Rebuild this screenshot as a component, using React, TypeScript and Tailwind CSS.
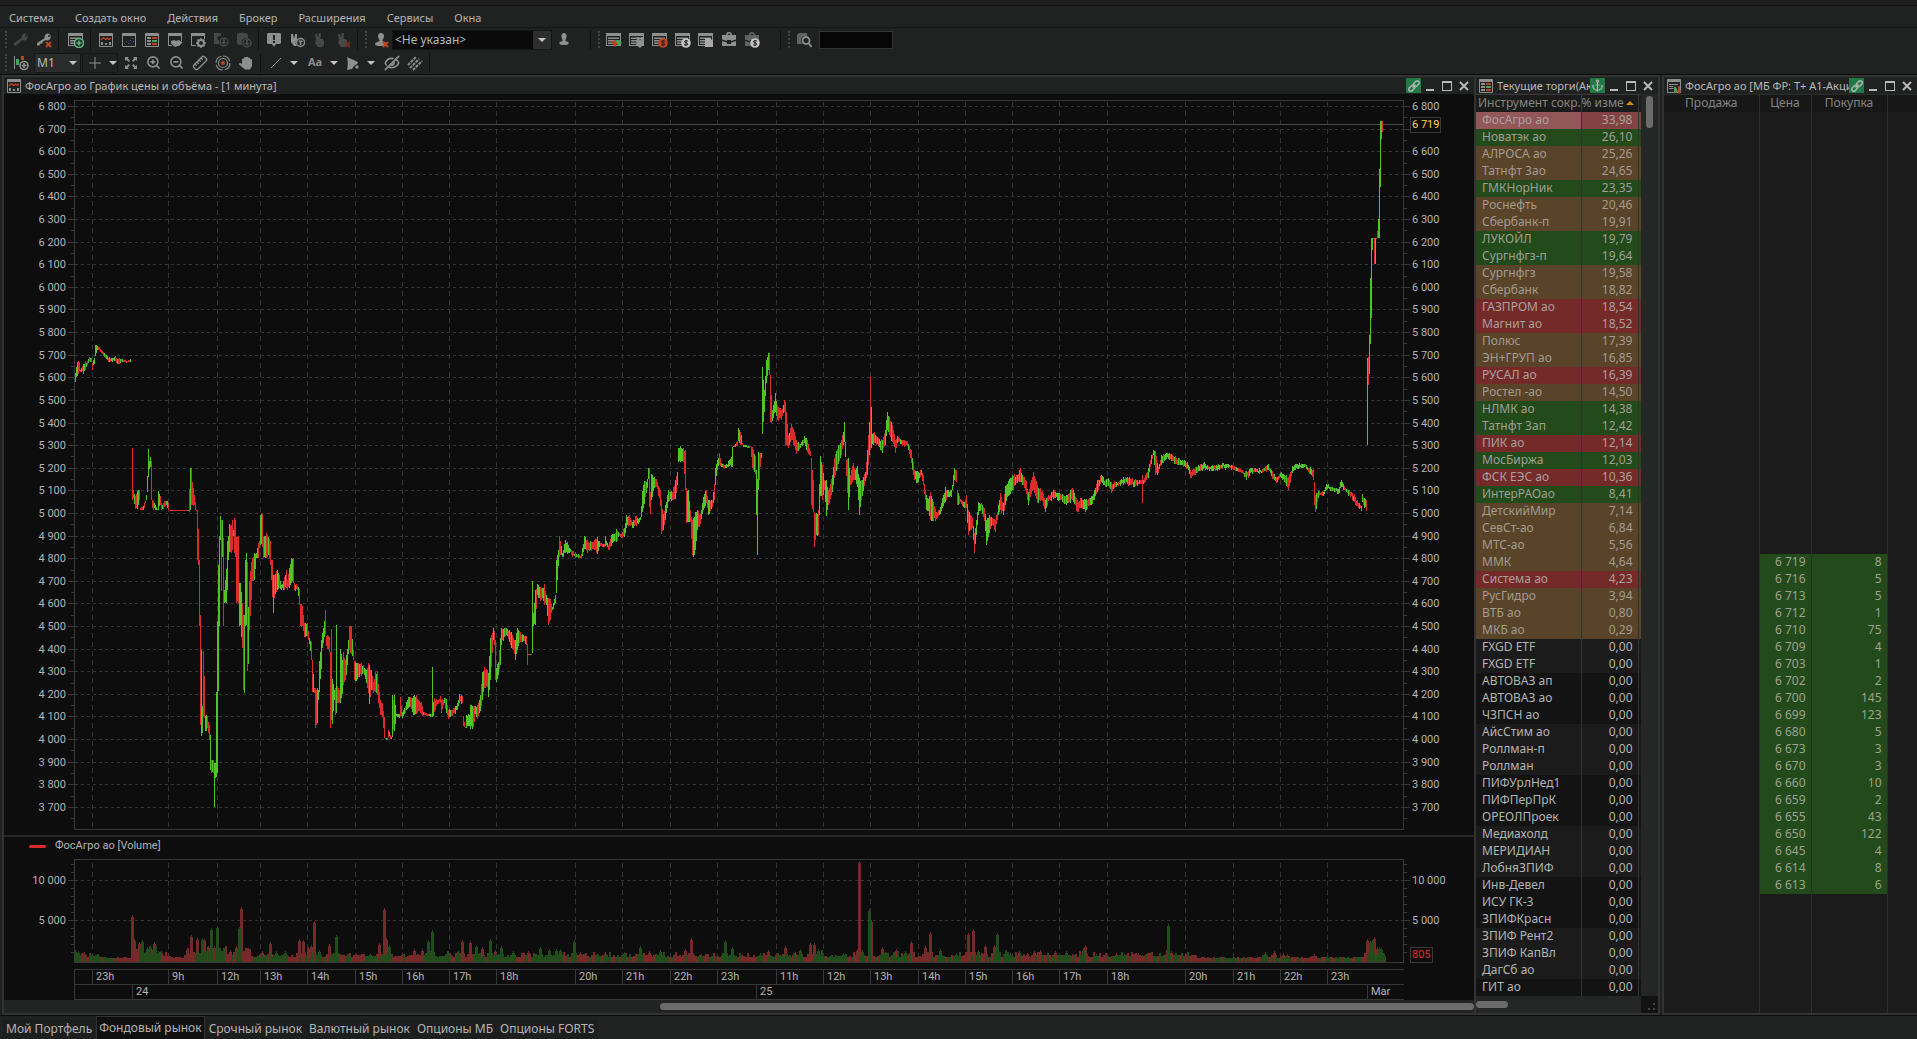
import type { ReactNode } from "react";
import { Anchor, EyeOff, Link, Ruler, ZoomIn, ZoomOut } from "lucide-react";

const MENU = ["Система", "Создать окно", "Действия", "Брокер", "Расширения", "Сервисы", "Окна"];

const TABS = ["Мой Портфель", "Фондовый рынок", "Срочный рынок", "Валютный рынок", "Опционы МБ", "Опционы FORTS"];

// name, change, row colour: s - selected, g - green, b - brown, r - red
const QUOTES: [string, string, string?][] = [
  ["ФосАгро ао", "33,98", "s"],
  ["Новатэк ао", "26,10", "g"],
  ["АЛРОСА ао", "25,26", "b"],
  ["Татнфт 3ао", "24,65", "b"],
  ["ГМКНорНик", "23,35", "g"],
  ["Роснефть", "20,46", "b"],
  ["Сбербанк-п", "19,91", "b"],
  ["ЛУКОЙЛ", "19,79", "g"],
  ["Сургнфгз-п", "19,64", "g"],
  ["Сургнфгз", "19,58", "b"],
  ["Сбербанк", "18,82", "b"],
  ["ГАЗПРОМ ао", "18,54", "r"],
  ["Магнит ао", "18,52", "r"],
  ["Полюс", "17,39", "b"],
  ["ЭН+ГРУП ао", "16,85", "b"],
  ["РУСАЛ ао", "16,39", "r"],
  ["Ростел -ао", "14,50", "b"],
  ["НЛМК ао", "14,38", "g"],
  ["Татнфт 3ап", "12,42", "g"],
  ["ПИК ао", "12,14", "r"],
  ["МосБиржа", "12,03", "g"],
  ["ФСК ЕЭС ао", "10,36", "r"],
  ["ИнтерРАОао", "8,41", "g"],
  ["ДетскийМир", "7,14", "b"],
  ["СевСт-ао", "6,84", "b"],
  ["МТС-ао", "5,56", "b"],
  ["ММК", "4,64", "b"],
  ["Система ао", "4,23", "r"],
  ["РусГидро", "3,94", "b"],
  ["ВТБ ао", "0,80", "b"],
  ["МКБ ао", "0,29", "b"],
  ["FXGD ETF", "0,00"],
  ["FXGD ETF", "0,00"],
  ["АВТОВАЗ ап", "0,00"],
  ["АВТОВАЗ ао", "0,00"],
  ["ЧЗПСН ао", "0,00"],
  ["АйсСтим ао", "0,00"],
  ["Роллман-п", "0,00"],
  ["Роллман", "0,00"],
  ["ПИФУрлНед1", "0,00"],
  ["ПИФПерПрК", "0,00"],
  ["ОРЕОЛПроек", "0,00"],
  ["Медиахолд", "0,00"],
  ["МЕРИДИАН", "0,00"],
  ["ЛобняЗПИФ", "0,00"],
  ["Инв-Девел", "0,00"],
  ["ИСУ ГК-3", "0,00"],
  ["ЗПИФКрасн", "0,00"],
  ["ЗПИФ Рент2", "0,00"],
  ["ЗПИФ КапВл", "0,00"],
  ["ДагСб ао", "0,00"],
  ["ГИТ ао", "0,00"],
];

const BIDS: [string, number][] = [
  ["6 719", 8], ["6 716", 5], ["6 713", 5], ["6 712", 1], ["6 710", 75],
  ["6 709", 4], ["6 703", 1], ["6 702", 2], ["6 700", 145], ["6 699", 123],
  ["6 680", 5], ["6 673", 3], ["6 670", 3], ["6 660", 10], ["6 659", 2],
  ["6 655", 43], ["6 650", 122], ["6 645", 4], ["6 614", 8], ["6 613", 6],
];

const HOURS: [number, string][] = [
  [92, "23h"], [168, "9h"], [217, "12h"], [260, "13h"], [307, "14h"], [355, "15h"], [402, "16h"],
  [449, "17h"], [496, "18h"], [575, "20h"], [622, "21h"], [670, "22h"], [717, "23h"], [776, "11h"],
  [823, "12h"], [870, "13h"], [918, "14h"], [965, "15h"], [1012, "16h"], [1059, "17h"], [1107, "18h"],
  [1185, "20h"], [1233, "21h"], [1280, "22h"], [1327, "23h"],
];

const DAYS: [number, string][] = [[132, "24"], [756, "25"], [1367, "Mar"]];

const X0 = 75;
const X1 = 1404;
const Y0 = 100;
const Y1 = 830;

// Outline of the price series: x, high, low, direction (g up, r down, m both)
const SERIES = `
75 373 382 g,76 367 377 g,77 362 376 g,79 362 371 r,80 370 372 r,82 366 371 m,83 364 374 m,85 361 370 r,87 361 365 m,89 357 361 r,91 358 362 r,92 363 370 r,93 360 365 g,94 358 364 g,95 345 356 g,97 346 350 m,99 347 350 r,101 350 353 r,104 353 357 g,107 356 360 m,109 357 362 g,112 358 362 m,115 356 361 m,118 359 364 m,121 359 362 m,124 360 362 m,127 361 362 r,130 359 362 g
132 448 500 r,133 490 498 r,135 496 509 r,137 491 509 g,139 490 500 r,140 508 510 r,143 506 510 g,146 495 500 g,147 476 492 g,148 449 477 g,149 461 469 g,150 457 467 g,151 461 500 r,152 500 508 r,155 505 510 m,157 509 510 r,158 491 510 g,160 496 505 r,161 503 510 r,165 501 506 m,168 503 510 r,169 510 511 r,188 510 511 g,190 468 510 g,191 468 505 r,192 482 505 r,194 495 505 r,195 502 510 r,196 510 511 r,197 510 560 r,198 529 565 r,199 560 626 r,200 615 725 r,201 650 736 g,202 706 733 g,203 651 716 r,204 676 718 r,205 716 731 g,207 716 728 r,209 725 740 r,210 735 770 g,211 760 773 r,213 760 773 r,214 763 807 g,215 763 778 g,217 621 773 g,218 565 691 g,219 536 626 g,220 516 540 g,221 520 591 r,222 520 557 g,223 538 626 r,224 590 603 g,226 569 603 g,227 541 590 g,228 536 560 g,229 524 552 m,231 525 553 r,232 520 550 r,233 530 536 g,234 518 553 r,235 520 557 r,236 537 603 r,238 536 603 r,239 583 626 g,240 583 625 g,242 603 648 r,243 615 690 r,244 615 693 g,245 560 626 g,246 553 625 m,247 562 671 r,248 607 664 g,249 581 630 r,251 562 600 r,252 558 581 r,254 553 580 g,256 553 558 g,258 543 558 r,259 541 548 r,260 515 545 g,262 514 547 r,263 537 558 r,265 536 558 g,266 533 558 m,268 537 555 g,270 541 565 r,271 560 580 r,272 560 597 r,273 575 613 g,274 575 598 r,277 570 590 g,279 575 588 m,281 585 590 g,284 577 590 r,286 570 588 r,287 580 590 m,289 568 588 g,291 558 583 g,293 558 583 r,294 583 590 m,297 586 590 r,299 589 605 r,300 604 626 r,302 606 626 r,304 623 637 r,305 623 637 g,307 623 636 r,309 638 644 g,311 642 660 r,312 660 692 r,314 688 693 m,315 688 728 r,317 688 723 g,318 690 700 g,319 661 692 g,321 640 669 g,322 633 648 g,324 621 637 g,325 610 634 r,326 636 646 r,328 636 649 m,329 637 652 r,330 652 728 r,331 629 720 r,332 679 724 g,334 690 700 g,335 688 715 r,336 625 713 g,337 686 703 r,339 690 702 r,340 649 703 g,342 660 694 g,343 652 685 r,345 660 680 r,346 655 675 g,348 640 654 g,349 626 650 r,351 626 654 r,353 650 660 r,354 661 680 m,356 663 681 g,358 663 677 r,363 665 673 r,366 670 683 g,368 663 693 r,369 665 704 g,371 670 690 g,373 682 693 r,375 672 692 r,377 671 695 r,378 684 703 r,380 700 715 r,382 703 717 r,384 717 738 r,385 738 739 r,387 738 740 r,388 730 738 r,391 737 739 g,392 695 737 g,393 700 729 r,394 695 731 g,396 714 716 g,399 714 718 g,400 697 716 r,402 712 718 g,405 706 713 m,408 697 708 g,410 697 707 r,413 696 715 g,416 695 714 r,418 700 711 r,421 702 714 r,423 712 715 g,428 714 716 r,431 714 717 r,432 667 717 g,433 702 716 g,434 698 712 r,437 700 704 m,440 696 703 r,441 700 713 r,444 698 703 g,446 699 713 m,448 710 719 r,452 710 716 r,455 706 714 g,457 703 710 g,459 694 703 g,462 696 703 r,463 716 726 r,465 727 728 r,466 715 728 g,469 715 726 m,470 705 729 g,473 706 727 r,475 706 714 g,477 705 719 m,480 695 711 g,482 672 700 g,484 667 688 m,487 670 687 r,488 673 697 g,490 638 680 m,493 628 640 g,494 631 645 r,495 640 680 r,496 668 682 g,498 662 675 g,500 638 665 g,501 628 645 g,504 628 637 g,507 629 636 m,511 632 648 g,513 638 650 r,515 640 660 g,517 628 650 m,520 632 642 r,523 635 641 m,526 636 645 r,527 644 665 r,528 654 655 r,531 654 655 r,532 581 653 g,533 613 626 g,535 590 625 g,537 584 595 g,540 587 601 r,542 588 598 g,544 584 605 r,546 595 605 g,548 598 625 r,550 599 620 r,552 607 610 g,555 595 603 g,556 560 593 g,558 550 566 g,559 536 557 r,562 553 557 g,565 540 553 m,568 545 553 g,571 550 555 m,575 552 558 r,580 556 558 r,582 548 556 g,584 536 549 g,587 540 553 r,590 541 550 g,594 540 550 r,597 537 554 g,600 543 546 r,604 544 547 m,605 536 546 g,608 545 550 r,611 535 546 g,614 534 541 g,616 529 542 g,619 533 536 r,621 534 538 r,624 528 537 g,626 515 528 g,629 515 525 r,632 522 528 m,635 516 525 r,638 519 524 g,640 517 520 g,642 491 512 g,644 481 504 g,647 479 488 g,648 468 479 g,649 468 507 r,650 492 514 r,651 474 500 g,654 477 488 m,657 482 489 r,660 490 506 r,661 500 534 r,663 514 530 m,665 505 520 g,668 490 502 g,672 492 500 r,675 480 499 g,677 472 485 g,678 448 462 g,680 446 462 m,683 448 462 r,685 450 490 r,686 488 523 r,688 490 522 g,690 510 522 m,692 520 555 r,693 518 557 g,695 512 550 g,697 510 530 g,700 514 524 m,703 497 510 g,706 490 503 r,708 500 515 m,712 500 507 r,714 484 500 m,715 468 485 g,717 460 470 g,719 453 465 m,721 463 467 g,725 465 468 g,729 460 466 m,731 457 467 g,732 447 467 g,733 446 447 g,737 441 446 r,738 428 441 g,740 432 445 r,743 445 447 g,750 446 447 r,752 447 468 r,755 456 474 r,757 479 555 g,758 452 490 g,760 453 467 r,761 453 458 g,762 367 434 g,764 390 412 g,766 360 383 g,768 353 370 g,769 353 375 r,770 375 422 r,772 410 421 g,775 393 412 g,777 405 420 r,781 410 420 m,784 400 412 r,785 402 445 r,788 435 448 m,791 424 440 r,794 432 446 r,796 440 454 r,800 444 448 g,804 436 443 g,807 440 452 r,810 451 456 r,811 458 505 r,813 480 512 r,814 512 547 r,816 513 535 g,818 510 535 r,820 456 496 g,822 465 500 r,824 480 490 m,826 480 516 g,828 490 505 r,832 475 492 g,834 458 478 m,838 445 464 g,841 440 455 r,843 432 445 g,844 422 442 g,846 460 476 r,848 458 510 g,850 475 485 r,853 463 480 m,855 470 480 g,857 466 487 m,859 478 515 g,861 480 500 r,865 472 481 g,867 450 475 g,869 422 455 g,870 377 450 r,872 434 444 g,874 432 443 m,878 438 446 r,882 440 453 m,885 430 445 g,887 412 430 g,889 417 435 r,892 425 442 r,895 440 453 r,897 436 443 g,902 440 446 m,907 441 446 r,911 450 463 r,914 470 480 r,917 471 483 m,921 470 475 g,923 475 485 r,926 495 510 g,928 499 511 g,930 492 520 r,933 502 521 r,936 512 519 m,939 510 515 g,942 498 508 m,945 487 502 g,948 490 497 m,951 490 497 m,954 468 480 g,956 470 482 r,957 490 505 r,961 500 504 r,964 502 508 g,966 495 508 r,968 510 535 r,972 518 528 m,974 533 553 r,976 520 535 g,978 502 515 g,981 503 510 r,984 508 521 r,986 520 545 g,989 515 533 g,992 518 525 r,995 520 532 r,998 505 515 g,1000 493 510 r,1003 503 515 m,1005 486 505 g,1008 481 496 g,1012 475 490 m,1017 475 483 g,1020 468 482 m,1023 477 485 r,1026 481 494 r,1028 492 505 m,1033 472 490 r,1037 485 503 r,1042 491 501 m,1045 500 512 g,1048 495 501 r,1053 490 499 m,1060 494 500 m,1066 495 505 m,1072 488 500 r,1077 500 512 r,1081 498 508 g,1085 500 512 m,1090 498 505 g,1094 490 500 g,1097 480 492 m,1101 475 482 g,1105 480 487 r,1108 478 486 g,1111 482 493 r,1115 482 487 m,1125 477 484 m,1134 480 487 m,1141 480 484 r,1142 475 503 r,1143 480 484 g,1145 475 482 m,1148 468 478 g,1151 455 464 g,1153 450 455 m,1155 451 475 r,1158 467 473 m,1161 455 465 g,1166 453 459 m,1171 454 461 m,1175 456 464 r,1180 460 465 m,1187 462 468 g,1190 470 478 r,1196 467 473 g,1203 463 469 g,1213 466 471 m,1222 463 468 g,1233 466 470 m,1242 470 473 r,1246 471 480 m,1250 468 473 g,1262 469 473 m,1268 464 470 g,1272 471 479 r,1276 477 483 r,1281 472 478 m,1288 477 490 r,1292 466 473 g,1297 464 469 g,1305 464 467 m,1308 468 472 r,1313 469 480 r,1314 482 505 r,1315 495 512 m,1319 490 495 r,1323 492 496 g,1326 484 490 g,1333 488 491 m,1338 489 494 g,1341 480 487 g,1345 488 491 m,1350 492 497 r,1354 494 502 r,1358 503 508 r,1361 506 511 g,1362 494 502 g,1366 500 511 r
1367 358 445 g,1368 357 385 r,1369 335 374 g,1370 278 344 g,1371 238 318 g,1372 238 250 g,1373 238 239 r,1374 238 264 r,1375 238 264 g,1376 238 239 r,1378 219 238 g,1379 169 238 g,1380 121 187 g,1381 121 139 g,1382 121 132 r`;

// Volume spikes: x, top, colour
const SPIKES = `75 950 g,78 951 g,84 952 r,92 957 r,97 955 g,132 915 r,134 939 r,139 942 r,142 940 g,147 947 g,151 948 r,154 942 r,158 951 g,161 951 r,168 954 r,187 948 r,191 935 r,197 938 r,202 938 g,204 939 r,208 946 r,211 928 g,214 946 r,217 926 g,223 949 r,230 950 r,236 946 r,239 927 g,241 907 r,246 949 r,262 951 r,270 942 r,276 951 g,285 951 g,299 939 r,303 940 r,308 947 r,311 945 r,314 921 r,319 950 g,329 944 r,336 935 g,348 954 g,370 953 g,379 943 r,384 908 r,386 938 r,389 945 g,402 953 r,414 949 r,422 949 r,428 940 g,432 930 g,450 953 r,458 951 g,462 940 r,470 941 r,476 945 g,482 947 r,490 939 g,495 950 r,501 946 g,513 951 g,528 951 r,540 947 g,549 949 g,556 949 g,560 949 g,574 940 g,580 952 r,605 952 r,624 952 g,640 946 g,649 951 r,660 950 g,685 949 r,691 938 r,701 954 g,725 940 g,732 947 g,760 953 g,768 950 r,785 946 r,795 952 r,800 949 g,810 943 r,814 943 r,818 949 g,843 953 g,857 949 r,859 861 r,862 950 g,869 909 g,871 920 r,882 947 r,896 949 r,905 951 g,911 941 r,925 946 r,930 932 r,940 949 g,956 953 g,968 933 r,973 929 r,978 950 g,985 945 r,994 945 r,997 933 g,1010 953 g,1019 951 r,1027 953 r,1034 951 r,1040 950 r,1055 951 r,1066 951 g,1072 954 r,1083 948 g,1085 945 r,1096 954 g,1116 953 r,1124 954 g,1138 953 r,1142 955 r,1167 948 r,1168 924 g,1171 951 r,1265 952 g,1274 951 r,1283 953 r,1287 954 r,1314 954 r,1367 939 r,1370 941 g,1372 940 g,1374 937 r,1377 947 r,1379 947 g,1381 948 g,1383 953 r`;

function createRandom(seed: number) {
  let s = seed;
  return () => {
    s = (s * 16807) % 2147483647;
    return s / 2147483647;
  };
}

function buildPrice() {
  const rnd = createRandom(17);
  const d = { g: "", r: "" };
  for (const line of SERIES.trim().split("\n")) {
    const pts = line.split(",").map((p) => p.split(" "));
    pts.forEach((p, i) => {
      const [x, hi, lo] = p.slice(0, 3).map(Number);
      const next = pts[i + 1] ? pts[i + 1].slice(0, 3).map(Number) : [x + 1, hi, lo];
      for (let k = x; k < next[0]; k++) {
        const t = (k - x) / (next[0] - x);
        let a = hi + (next[1] - hi) * t;
        let b = lo + (next[2] - lo) * t;
        if (k > x && b - a > 4) {
          a += Math.round(rnd() * 3 - 1);
          b -= Math.round(rnd() * 3 - 1);
        }
        let c: "g" | "r" = p[3] === "g" ? "g" : "r";
        if (p[3] === "m") c = rnd() > 0.5 ? "g" : "r";
        else if (k > x && rnd() > 0.75) c = c === "g" ? "r" : "g";
        a = Math.round(a);
        const bottom = Math.max(a + (hi + 1 < lo ? 2 : 1), Math.round(b));
        d[c] += `M${k} ${a}h1V${bottom}h-1z`;
      }
    });
  }
  return d;
}

function buildVolume() {
  const rnd = createRandom(5);
  const d = { g: "", r: "" };
  for (let x = 75; x < 1384; x += 2) {
    const quiet = (x > 98 && x < 131) || (x > 168 && x < 186) || (x > 1195 && x < 1366);
    const busy = (x > 131 && x < 160) || (x > 186 && x < 250);
    const c = x > 160 && x < 190 ? "r" : Math.sin(x / 9) + rnd() * 2.4 > 1.1 ? "r" : "g";
    const h = quiet ? 4 + rnd() : busy ? 7 + rnd() * 9 : 5 + rnd() * rnd() * 7;
    d[c] += `M${x} 962V${Math.round(962 - h)}h2V962z`;
  }
  for (const s of SPIKES.split(",")) {
    const [x, top, c] = s.split(" ");
    const y = Number(top);
    const bar = `M${Number(x) - 1} 962V${y + 2}h1V${y}h1V${y + 2}h1V962z`;
    d[c as "g" | "r"] += bar;
    // shoulders beside every spike
    if (962 - y < 36) d[c as "g" | "r"] += `M${Number(x) - 3} 962V${Math.round(957 - (962 - y) / 6)}h6V962z`;
  }
  return d;
}

const PRICE = buildPrice();
const VOLUME = buildVolume();
const PRICE_LABELS = Array.from({ length: 32 }, (_, i) => 6800 - i * 100);
const priceY = (p: number) => Math.round(106 + (6800 - p) * 0.2261);
const spaced = (n: number) => String(n).replace(/(\d)(\d{3})$/, "$1 $2");

const ROW_COLORS: Record<string, string> = {
  s: "bg-[#834344] text-[#a8a09c]",
  g: "bg-[#224a1a] text-[#a09f94]",
  b: "bg-[#594329] text-[#a39b90]",
  r: "bg-[#752a2a] text-[#a8a09c]",
};

function Glyph({ children, dim }: { children: ReactNode; dim?: boolean }) {
  return (
    <svg viewBox="0 0 16 16" className={dim ? "h-4 w-4 text-[#474848]" : "h-4 w-4 text-[#8e8f8f]"} fill="currentColor" aria-hidden="true">
      {children}
    </svg>
  );
}

function Frame({ children }: { children?: ReactNode }) {
  return (
    <>
      <path fillRule="evenodd" d="M2 1h12a1 1 0 0 1 1 1v12a1 1 0 0 1-1 1H2a1 1 0 0 1-1-1V2a1 1 0 0 1 1-1zM2 4v10h12V4z" />
      {children}
    </>
  );
}

function Sheet({ children }: { children?: ReactNode }) {
  return (
    <>
      <path fillRule="evenodd" d="M0 1h15v13H0zM1 4v9h13V4z" />
      <path d="M2 5.500h11v1.500H2zM2 8h7v1.500H2zM2 10.500h5v1.500H2z" />
      {children}
    </>
  );
}

const ChartMark = () => (
  <>
    <path d="M3 8l2.500-2.500 2 2 2-1.500 1.500 1.500L13 6" fill="none" stroke="#c2411d" strokeWidth="1.200" />
    <path d="M3 10h2v3H3zM7 11h2v2H7zM11 10h2v3h-2z" />
  </>
);

const ListMark = () => (
  <>
    <path d="M3 5h4v2H3zM3 8h4v2H3zM3 11h4v2H3z" />
    <path d="M8 5h5v2H8zM8 11h5v2H8z" fill="#c2411d" />
    <path d="M8 8h5v2H8z" fill="#4ba35b" />
  </>
);

const Cross = () => <path d="M10 10l5 5M15 10l-5 5" stroke="#c2411d" strokeWidth="2" fill="none" />;

const Key = () => (
  <path fillRule="evenodd" d="M12 1.500a3.500 3.500 0 0 0-3.300 4.600L1 11v2.500h2.500l.8-1.700 1.900-.4.6-1.600 3-1.700A3.500 3.500 0 1 0 12 1.500zm1 1.600a1 1 0 1 1 0 2 1 1 0 0 1 0-2z" />
);

const Person = () => <path d="M8 1a3 3 0 0 1 3 3c0 2-1 3-1.500 4v1l3.500 1.500a2 2 0 0 1 1 1.500c0 1.500-2 2-6 2s-6-.5-6-2a2 2 0 0 1 1-1.500L6.500 9V8C6 7 5 6 5 4a3 3 0 0 1 3-3z" />;

const Dollar = ({ fill }: { fill: string }) => (
  <>
    <circle cx="11" cy="11" r="4.800" fill={fill} />
    <path d="M13 9.200c-.8-.8-3.600-.8-3.600.6s3.400.8 3.400 2.300-2.800 1.500-3.800.5M11 8v6" stroke="#222" fill="none" />
  </>
);

const Fingers = () => <path d="M4 8L3 2h2l1 4 1-5h2L8.500 7h2L12 9v4l-2 2H6l-3-4z" />;

const Case = () => (
  <path fillRule="evenodd" d="M5 3a3 3 0 0 1 6 0h4v4.500L10 9V8H6v1L1 7.500V3zm1.500 0h3a1.500 1.500 0 0 0-3 0zM1 9l5 1.500V12h4v-1.500L15 9v5H1z" />
);

function Tool({ label, children, dim }: { label: string; children: ReactNode; dim?: boolean }) {
  return (
    <button type="button" aria-label={label} disabled={dim} className="flex h-[22px] w-[23px] shrink-0 items-center justify-center text-[#8e8f8f]">
      {children}
    </button>
  );
}

const Sep = () => <span className="mx-[3px] h-[20px] w-px shrink-0 bg-[#111212]" />;
const Grip = () => <span className="mr-px ml-1 h-[17px] w-[3px] shrink-0 border-l-2 border-dotted border-[#434444]" />;
const Down = () => (
  <svg viewBox="0 0 8 4" className="h-1 w-2" aria-hidden="true">
    <path d="M0 0h8L4 4z" fill="#c4c4c4" />
  </svg>
);

function Arrow({ label }: { label: string }) {
  return (
    <button type="button" aria-label={label} className="flex h-[20px] w-[14px] shrink-0 items-center justify-center">
      <Down />
    </button>
  );
}

function TopToolbar() {
  return (
    <div className="flex h-6 items-center border-t border-[#141515] pl-px">
      <Grip />
      <Tool label="Подключить" dim><Glyph dim><Key /></Glyph></Tool>
      <Tool label="Отключить"><Glyph><Key /><Cross /></Glyph></Tool>
      <Sep />
      <span className="w-0.5 shrink-0" />
      <Tool label="Новая таблица">
        <Glyph>
          <Sheet><circle cx="11" cy="11" r="4.500" fill="#20302a" stroke="#62b87c" strokeWidth="1.500" /><path d="M11 8.500v5M8.500 11h5" stroke="#62b87c" strokeWidth="1.500" /></Sheet>
        </Glyph>
      </Tool>
      <Sep />
      <Tool label="График"><Glyph><Frame><ChartMark /></Frame></Glyph></Tool>
      <Tool label="Тиковый график">
        <Glyph><Frame><path d="M3 11h1v1H3zM5 9h1v1H5zM7 11h1v1H7zM9 8h1v1H9zM11 6h1v1h-1zM12 9h1v1h-1z" fill="#3d6fb5" /></Frame></Glyph>
      </Tool>
      <Tool label="Текущие торги"><Glyph><Frame><ListMark /></Frame></Glyph></Tool>
      <Tool label="Сделки"><Glyph><path d="M1 1h14v8h-1V4H2v9h3v1H1z" /><path d="M4 9l3-1 2 1 3-1 3.500 2.500L12 14h-1l-3 1-4-3.500z" /></Glyph></Tool>
      <Tool label="Настройки">
        <Glyph><path d="M1 1h14v6h-1V4H2v9h4v1H1z" /><circle cx="11" cy="11" r="3" fill="none" stroke="currentColor" strokeWidth="2" /><path d="M11 6v2M11 14v2M6 11h2M14 11h2M7.500 7.500L9 9M13 13l1.500 1.500M14.500 7.500L13 9M9 13l-1.500 1.500" stroke="currentColor" strokeWidth="1.500" /></Glyph>
      </Tool>
      <Tool label="Экспорт в Excel" dim><Glyph dim><path d="M1 1h7v3H5L4 6l2 3v3H1z" /><circle cx="11" cy="10" r="4" fill="none" stroke="currentColor" strokeWidth="1.500" /><path d="M10 7h2v3h2l-3 3-3-3h2z" /></Glyph></Tool>
      <Tool label="Экспорт в базу" dim><Glyph dim><path d="M1 3c0-3 11-3 11 0v3a5 5 0 0 0-6 7c-3 0-5-1-5-2z" /><circle cx="11" cy="11" r="4" fill="none" stroke="currentColor" strokeWidth="1.500" /><path d="M10 8h2v3h2l-3 3-3-3h2z" /></Glyph></Tool>
      <Sep />
      <Tool label="Сообщения"><Glyph><path fillRule="evenodd" d="M2 1h12l1 1v9l-1 1h-4l-2 3-2-3H2l-1-1V2zM7 3v5h2V3zm0 6v2h2V9z" /></Glyph></Tool>
      <Tool label="Заявка T"><Glyph><path d="M2 2h2l1 5 1-5h2v6a4 4 0 0 0 0 6H5L2 10z" /><circle cx="11.500" cy="10.500" r="4" fill="#202222" stroke="currentColor" strokeWidth="1.500" /><path d="M9.500 8.500h4v1.500h-1.200v3h-1.600v-3H9.500z" /></Glyph></Tool>
      <Tool label="Заявка" dim><Glyph dim><Fingers /></Glyph></Tool>
      <Tool label="Снять заявку" dim><Glyph dim><Fingers /><path d="M10 10l5 5M15 10l-5 5" stroke="#6e2f1f" strokeWidth="2" /></Glyph></Tool>
      <Sep />
      <Grip />
      <Tool label="Счёт не выбран"><Glyph><Person /><Cross /></Glyph></Tool>
      <div className="relative h-5 w-[160px] shrink-0">
        <select aria-label="Счёт" className="h-5 w-full appearance-none rounded-none border border-[#141515] bg-[#0a0a0a] pl-0.5 text-xs leading-4 text-[#b8b8b8]">
          <option>&lt;Не указан&gt;</option>
        </select>
        <span className="pointer-events-none absolute inset-y-px right-px flex w-[18px] items-center justify-center bg-[#2d2e2e]"><Down /></span>
      </div>
      <Tool label="Пользователь"><Glyph><path d="M8 1a2.600 2.600 0 0 1 2.600 3C10.500 6 9.500 7 9.500 9l3 1v2c-1 1.300-8 1.300-9 0v-2l3-1c0-2-1-3-1.100-5A2.600 2.600 0 0 1 8 1z" /></Glyph></Tool>
      <span className="w-3 shrink-0" />
      <Sep />
      <Grip />
      <Tool label="Сделки счёта"><Glyph><Sheet><path d="M5 10l4-2 3 2-3 5z" fill="#c2411d" /><path d="M9 8h5l2 3-4 3-1-3z" fill="#4ba35b" /></Sheet></Glyph></Tool>
      <Tool label="Заявки счёта"><Glyph><Sheet><path d="M8 5h2l1 4 1-4h2v8l-3 3-4-3z" /></Sheet></Glyph></Tool>
      <Tool label="Стоп-заявки"><Glyph><Sheet><Dollar fill="#c2411d" /></Sheet></Glyph></Tool>
      <Tool label="Деньги"><Glyph><Sheet><Dollar fill="#c4c4c4" /></Sheet></Glyph></Tool>
      <Tool label="Отчёты"><Glyph><Sheet><path d="M7 6h5l3 3v6H7z" fill="#a8a8a8" /></Sheet></Glyph></Tool>
      <Tool label="Портфель"><Glyph><Case /></Glyph></Tool>
      <Tool label="Позиции"><Glyph><g opacity=".6"><Case /></g><Dollar fill="#c4c4c4" /></Glyph></Tool>
      <span className="w-[14px] shrink-0" />
      <Sep />
      <Grip />
      <Tool label="Поиск инструмента">
        <Glyph><path d="M3 1h8v4a4 4 0 0 0-4 7H1V3z" opacity=".6" /><circle cx="10" cy="8.500" r="3.500" fill="none" stroke="currentColor" strokeWidth="1.800" /><path d="M12.500 11l3 4" stroke="currentColor" strokeWidth="2" /></Glyph>
      </Tool>
      <input aria-label="Поиск" className="ml-1 h-[18px] w-[74px] shrink-0 rounded-none border border-[#333] bg-[#070707] px-1 text-xs text-[#b8b8b8] outline-none" />
    </div>
  );
}

function ChartToolbar() {
  return (
    <div className="flex h-[23px] items-center pl-px">
      <Grip />
      <Tool label="Добавить индикатор">
        <Glyph><path d="M1 1h1v13H1z" /><path d="M3 4h3v6H3z" fill="#4ba35b" /><path d="M8 1h3v4H8z" fill="#c2411d" /><circle cx="11" cy="10.500" r="4" fill="#202222" stroke="currentColor" strokeWidth="1.600" /><path d="M11 8v5M8.500 10.500h5" stroke="currentColor" strokeWidth="1.500" /></Glyph>
      </Tool>
      <div className="relative ml-0.5 h-5 w-[47px] shrink-0">
        <select aria-label="Интервал" className="h-5 w-full appearance-none rounded-none border border-[#161717] bg-[#2b2c2c] pl-0.5 text-xs leading-4 text-[#b8b8b8]">
          <option>M1</option>
        </select>
        <span className="pointer-events-none absolute inset-y-0 right-1 flex items-center"><Down /></span>
      </div>
      <div className="ml-px flex h-5 w-[36px] shrink-0 items-center border border-[#161717]">
        <Tool label="Курсор"><Glyph><path d="M7.500 2h1v12h-1zM2 7.500h12v1H2z" /></Glyph></Tool>
        <Arrow label="Вид курсора" />
      </div>
      <span className="w-px" />
      <Tool label="Развернуть">
        <Glyph><path d="M2 2h4L4.700 3.300 7 5.600 5.600 7 3.300 4.700 2 6zM14 2v4l-1.300-1.300L10.400 7 9 5.600l2.300-2.300L10 2zM2 14v-4l1.300 1.300L5.600 9 7 10.400l-2.300 2.300L6 14zM14 14h-4l1.300-1.300L9 10.400 10.400 9l2.300 2.300L14 10z" /></Glyph>
      </Tool>
      <Tool label="Увеличить"><ZoomIn size={15} strokeWidth={2.500} /></Tool>
      <Tool label="Уменьшить"><ZoomOut size={15} strokeWidth={2.500} /></Tool>
      <Tool label="Линейка"><Ruler size={16} className="-scale-x-100" /></Tool>
      <Tool label="Центрировать"><Glyph><circle cx="8" cy="8" r="7" fill="none" stroke="currentColor" strokeWidth="1.200" strokeDasharray="9 2" /><circle cx="8" cy="8" r="4.500" fill="none" stroke="currentColor" strokeWidth="1.200" /><circle cx="8" cy="8" r="2" fill="#c2411d" /></Glyph></Tool>
      <Tool label="Рука"><Glyph><path d="M4 9V4.500a1 1 0 0 1 2 0V3a1 1 0 0 1 2 0v-.2a1 1 0 0 1 2 0V3.500a1 1 0 0 1 2 0V5a1 1 0 0 1 2 0v6l-2 3.500H7L1 9.500a1.200 1.200 0 0 1 1.500-1.500z" /></Glyph></Tool>
      <Sep />
      <Tool label="Линия"><Glyph><path d="M3 13L13 3" stroke="currentColor" /></Glyph></Tool>
      <Arrow label="Виды линий" />
      <button type="button" className="ml-0.5 h-5 w-[24px] shrink-0 text-[11px] font-bold text-[#8e8f8f]">Aa</button>
      <Arrow label="Виды текста" />
      <Tool label="Сигнал"><Glyph><path d="M2 2l11 5-1 2-3 2-2 3-5 1c1-4 1-9 0-13z" /><circle cx="12" cy="12" r="1.700" /></Glyph></Tool>
      <Arrow label="Виды сигналов" />
      <span className="w-0.5 shrink-0" />
      <Tool label="Скрыть"><EyeOff size={16} strokeWidth={2.500} className="-scale-x-100" /></Tool>
      <Tool label="Удалить объекты"><Glyph><path d="M1 10l8-8M3 13l9-9M6 15l9-9" stroke="currentColor" strokeWidth="2" strokeDasharray="3 1" /></Glyph></Tool>
      <Sep />
    </div>
  );
}

function ChainIcon() {
  return (
    <svg viewBox="0 0 14 14" className="h-3.5 w-3.5" fill="none" stroke="currentColor" strokeWidth="1.500" aria-hidden="true">
      <rect x="0.500" y="5" width="6.500" height="4" rx="2" transform="rotate(-45 7 7)" />
      <rect x="7" y="5" width="6.500" height="4" rx="2" transform="rotate(-45 7 7)" />
      <path d="M5.500 8.500l3-3" />
    </svg>
  );
}

function TitleBar({ icon, title, pin }: { icon: ReactNode; title: string; pin: ReactNode }) {
  return (
    <div className="flex h-[17px] shrink-0 items-center bg-[#202121] pr-0.5 text-[#b9b9b9]">
      <span className="mr-[3px] ml-0.5 shrink-0">{icon}</span>
      <h2 className="min-w-0 flex-1 text-[11px] leading-4 whitespace-nowrap">{title}</h2>
      <button type="button" aria-label="Связать" className="flex h-[15px] w-[15px] shrink-0 items-center justify-center bg-[#217a45] text-[#a9b5ad]">{pin}</button>
      <button type="button" aria-label="Свернуть" className="flex h-4 w-[17px] shrink-0 items-center justify-center">
        <svg viewBox="0 0 10 10" className="h-2.5 w-2.5"><path d="M1 8h8v2H1z" fill="currentColor" /></svg>
      </button>
      <button type="button" aria-label="Развернуть" className="flex h-4 w-[17px] shrink-0 items-center justify-center">
        <svg viewBox="0 0 10 10" className="h-2.5 w-2.5"><path fillRule="evenodd" d="M0 0h10v10H0zM1 2v7h8V2z" fill="currentColor" /></svg>
      </button>
      <button type="button" aria-label="Закрыть" className="flex h-4 w-[17px] shrink-0 items-center justify-center">
        <svg viewBox="0 0 10 10" className="h-2.5 w-2.5"><path d="M1 1l8 8M9 1L1 9" stroke="currentColor" strokeWidth="2" /></svg>
      </button>
    </div>
  );
}

function Ticks({ from, to, marks, flip }: { from: number; to: number; marks: [number, boolean][]; flip?: boolean }) {
  return (
    <svg viewBox={`0 ${from} 6 ${to - from}`} preserveAspectRatio="none" className="h-full w-1.5 shrink-0" shapeRendering="crispEdges" aria-hidden="true">
      {marks.map(([y, major]) => (
        <path key={y} d={flip ? `M0 ${y}h${major ? 6 : 3}v1H0z` : `M6 ${y}h${major ? -6 : -3}v1H6z`} fill="#383838" />
      ))}
    </svg>
  );
}

const PRICE_TICKS: [number, boolean][] = PRICE_LABELS.flatMap((p): [number, boolean][] => [
  [priceY(p), true],
  [priceY(p - 50), false],
]);
const VOLUME_TICKS: [number, boolean][] = Array.from({ length: 12 }, (_, i): [number, boolean] => [864 + i * 8, i === 2 || i === 7]);

function Hours({ from, to }: { from: number; to: number }) {
  return (
    <>
      {HOURS.map(([x]) => (
        <path key={x} d={`M${x + 0.5} ${from}V${to}`} stroke="#333" strokeDasharray="5 4" />
      ))}
    </>
  );
}

function TimeRow({ marks }: { marks: [number, string][] }) {
  return (
    <div className="flex h-[15px] border-t border-l border-[#383838] leading-[14px]">
      <span className="shrink-0" style={{ width: `${((marks[0][0] - X0) / (X1 - X0)) * 100}%` }} />
      {marks.map(([x, text], i) => {
        const next = i + 1 < marks.length ? marks[i + 1][0] : X1;
        return (
          <span key={x} className="border-l border-[#383838] pl-[3px] whitespace-nowrap" style={{ width: `${((next - x) / (X1 - X0)) * 100}%` }}>
            {text}
          </span>
        );
      })}
    </div>
  );
}

function PriceLabels() {
  return (
    <div className="flex h-full flex-col justify-between pt-px pb-4">
      {PRICE_LABELS.map((p) => (
        <span key={p} className="h-3 leading-3">{spaced(p)}</span>
      ))}
    </div>
  );
}

function VolumeLabels({ align }: { align: "left" | "right" }) {
  return (
    <div className={align === "right" ? "flex flex-col gap-7 pt-4 text-right" : "flex flex-col gap-7 pt-4"}>
      <span className="h-3 leading-3">10 000</span>
      <span className="h-3 leading-3">5 000</span>
    </div>
  );
}

function ChartWindow() {
  return (
    <section className="flex min-w-0 flex-1 flex-col border-2 border-[#333] bg-[#0d0d0d]">
      <TitleBar icon={<Glyph><Frame><ChartMark /></Frame></Glyph>} title="ФосАгро ао График цены и объёма - [1 минута]" pin={<ChainIcon />} />
      <div className="flex min-h-0 flex-1 pt-[6px] pb-[5px] font-[Roboto,'Liberation_Sans',sans-serif] text-[11px] text-[#b4b4b4]">
        <div className="flex w-[70px] shrink-0 justify-end gap-0.5">
          <PriceLabels />
          <Ticks from={Y0} to={Y1} marks={PRICE_TICKS} />
        </div>
        <svg viewBox={`${X0 - 1} ${Y0} ${X1 - X0 + 1} ${Y1 - Y0}`} preserveAspectRatio="none" className="h-full min-w-0 flex-1" shapeRendering="crispEdges" role="img" aria-label="График цены">
          {PRICE_LABELS.map((p) => (
            <path key={p} d={`M${X0} ${priceY(p) + 0.5}H${X1}`} stroke="#333" strokeDasharray="3 3" />
          ))}
          <Hours from={102} to={830} />
          <path d={`M${X0} 124.500H${X1}`} stroke="#4a4a4a" />
          <rect x="74.500" y="100.500" width="1329" height="729" fill="none" stroke="#383838" />
          <path d={PRICE.r} fill="#dc2b2b" />
          <path d={PRICE.g} fill="#52c42a" />
        </svg>
        <div className="relative flex w-[70px] shrink-0 gap-0.5">
          <Ticks from={Y0} to={Y1} marks={PRICE_TICKS} flip />
          <PriceLabels />
          <span className="absolute top-[17px] left-1.5 h-4 border border-[#383838] bg-[#0d0d0d] px-px leading-[14px] text-[#ffd54a]">6 719</span>
        </div>
      </div>
      <div className="shrink-0 border-t-2 border-[#262626] font-[Roboto,'Liberation_Sans',sans-serif] text-[11px] text-[#b4b4b4]">
        <div className="flex h-[22px] items-center gap-[9px] pb-1 pl-[25px]">
          <span className="h-[3px] w-[17px] rounded-full bg-[#dc2b2b]" />
          <span>ФосАгро ао [Volume]</span>
        </div>
        <div className="flex h-[104px]">
          <div className="flex w-[70px] shrink-0 justify-end gap-0.5">
            <VolumeLabels align="right" />
            <Ticks from={859} to={963} marks={VOLUME_TICKS} />
          </div>
          <svg viewBox={`${X0 - 1} 859 ${X1 - X0 + 1} 104`} preserveAspectRatio="none" className="h-full min-w-0 flex-1" shapeRendering="crispEdges" role="img" aria-label="Объём торгов">
            <path d={`M${X0} 880.500H${X1}M${X0} 920.500H${X1}`} stroke="#333" strokeDasharray="3 3" />
            <Hours from={863} to={962} />
            <rect x="74.500" y="859.500" width="1329" height="103" fill="none" stroke="#383838" />
            <path d={VOLUME.r} fill="#752a2a" />
            <path d={VOLUME.g} fill="#224d1b" />
          </svg>
          <div className="relative flex w-[70px] shrink-0 gap-0.5">
            <Ticks from={859} to={963} marks={VOLUME_TICKS} flip />
            <VolumeLabels align="left" />
            <span className="absolute bottom-0 left-1.5 h-4 border border-[#383838] bg-[#0d0d0d] px-px leading-[14px] text-[#e02a2a]">805</span>
          </div>
        </div>
        <div className="mr-[70px] ml-[70px] border-b border-[#383838] pt-[6px]">
          <TimeRow marks={HOURS} />
          <TimeRow marks={DAYS} />
        </div>
      </div>
      <div className="flex h-[13px] shrink-0 items-center justify-end bg-[#222423]">
        <div className="h-[7px] w-[55.4%] rounded-sm bg-[#6b6b6b]" />
      </div>
    </section>
  );
}

function QuotesWindow() {
  return (
    <section className="flex w-[184px] shrink-0 flex-col border-2 border-l-0 border-[#333] bg-[#1b1b1b]">
      <TitleBar icon={<Glyph><Frame><ListMark /></Frame></Glyph>} title="Текущие торги(Ак" pin={<Anchor size={13} />} />
      <div className="flex min-h-0 flex-1">
        <div className="min-w-0 flex-1 overflow-hidden">
          <table className="w-full table-fixed border-collapse text-xs leading-4">
            <colgroup>
              <col />
              <col className="w-[57px]" />
              <col className="w-[3px]" />
            </colgroup>
            <thead>
              <tr className="h-[17px] text-[#858585]">
                <th className="border-t border-r border-[#3a3a3a] p-0 pl-0.5 text-left font-normal whitespace-nowrap">Инструмент сокр.</th>
                <th className="border-t border-r border-[#3a3a3a] p-0 font-normal">
                  <span className="flex items-center justify-between pr-1">
                    <span className="whitespace-nowrap">% изме</span>
                    <svg viewBox="0 0 8 4" className="h-1 w-2 shrink-0"><path d="M0 4h8L4 0z" fill="#d98a0b" /></svg>
                  </span>
                </th>
                <th className="border-t border-[#3a3a3a] p-0" />
              </tr>
            </thead>
            <tbody>
              {QUOTES.map(([name, change, color], i) => (
                <tr key={i} className={`h-[17px] ${color ? ROW_COLORS[color] : Math.floor(i / 3) % 2 ? "bg-[#131313] text-[#b4b4b4]" : "bg-[#1b1b1b] text-[#b4b4b4]"}`}>
                  <td className={`border-r border-[#333] p-0 pl-[6px] whitespace-nowrap ${color === "s" ? "bg-[#935659]" : ""}`}>{name}</td>
                  <td className="border-r border-[#333] p-0 pr-[5px] text-right">{change}</td>
                  <td className="p-0" />
                </tr>
              ))}
            </tbody>
          </table>
        </div>
        <div className="w-[17px] shrink-0 bg-[#252726] pt-0.5">
          <div className="mx-auto h-8 w-[7px] rounded-sm bg-[#6b6b6b]" />
        </div>
      </div>
      <div className="flex h-[17px] shrink-0 items-center bg-[#252726]">
        <div className="h-[7px] w-8 rounded-sm bg-[#6b6b6b]" />
        <div className="ml-auto flex h-full w-[17px] items-end justify-end bg-[#131313] p-0.5">
          <svg viewBox="0 0 8 8" className="h-2 w-2"><path d="M5 0h2v2H5zM0 5h2v2H0zM5 5h2v2H5z" fill="#444" /></svg>
        </div>
      </div>
    </section>
  );
}

function OrderBookWindow() {
  return (
    <section className="ml-0.5 flex w-[255px] shrink-0 flex-col border-2 border-r-0 border-[#333] bg-[#1b1b1b]">
      <TitleBar
        icon={<Glyph><Frame><path d="M3 6h9v1H3zM3 8h4v1H3zM3 10h4v1H3z" /><path d="M7 11l2-3 2 3v4H8v-4z" fill="#4ba35b" /><path d="M12 8h2v4h1.500L13 16l-2.500-4H12z" fill="#c2411d" /></Frame></Glyph>}
        title="ФосАгро ао [МБ ФР: Т+ А1-Акци"
        pin={<ChainIcon />}
      />
      <div className="flex min-h-0 flex-1 flex-col">
        <table className="h-full w-full table-fixed border-collapse text-xs leading-4">
          <colgroup>
            <col />
            <col className="w-[52px]" />
            <col className="w-[76px]" />
            <col className="w-[30px]" />
          </colgroup>
          <thead>
            <tr className="h-[17px] bg-[#171717] text-[#858585]">
              <th className="border-t border-r border-[#2d2d2d] p-0 font-normal">Продажа</th>
              <th className="border-t border-r border-[#2d2d2d] p-0 font-normal">Цена</th>
              <th className="border-t border-r border-[#2d2d2d] p-0 font-normal">Покупка</th>
              <th className="border-t border-[#2d2d2d] p-0" />
            </tr>
          </thead>
          <tbody>
            <tr className="h-[442px]">
              <td className="border-r border-[#2d2d2d]" />
              <td className="border-r border-[#2d2d2d]" />
              <td className="border-r border-[#2d2d2d]" />
              <td />
            </tr>
            {BIDS.map(([price, qty]) => (
              <tr key={price} className="h-[17px] text-[#9da294]">
                <td className="border-r border-[#2d2d2d] p-0" />
                <td className="border-r border-[#2d2d2d] bg-[#224a1a] p-0 pr-[5px] text-right">{price}</td>
                <td className="border-r border-[#2d2d2d] bg-[#224a1a] p-0 pr-[5px] text-right">{qty}</td>
                <td className="p-0" />
              </tr>
            ))}
            <tr>
              <td className="border-r border-[#2d2d2d]" />
              <td className="border-r border-[#2d2d2d]" />
              <td className="border-r border-[#2d2d2d]" />
              <td />
            </tr>
          </tbody>
        </table>
      </div>
    </section>
  );
}

export default function App() {
  return (
    <div className="flex h-screen flex-col overflow-hidden bg-[#202222] font-['Noto_Sans','Open_Sans',sans-serif] text-xs text-[#b4b4b4]">
      <div className="h-[6px] shrink-0 border-b border-[#121313] bg-[#1e1e1e]" />
      <nav className="flex h-[21px] shrink-0 items-center gap-[21px] pt-0.5 pl-[9px]">
        {MENU.map((m) => (
          <button key={m} type="button" className="text-[11px] leading-4">{m}</button>
        ))}
      </nav>
      <TopToolbar />
      <ChartToolbar />
      <main className="flex min-h-0 flex-1 border-t border-b border-[#0c0c0c] pl-0.5">
        <ChartWindow />
        <QuotesWindow />
        <OrderBookWindow />
      </main>
      <footer className="flex h-[23px] shrink-0 gap-px pl-[3px]">
        {TABS.map((t) => (
          <button
            key={t}
            type="button"
            className={t === "Фондовый рынок" ? "border border-b-0 border-[#333] bg-[#101010] px-0.5" : "mt-1 border border-b-0 border-[#1b1c1c] bg-[#1d1e1e] px-0.5 pb-1"}
          >
            {t}
          </button>
        ))}
      </footer>
    </div>
  );
}
